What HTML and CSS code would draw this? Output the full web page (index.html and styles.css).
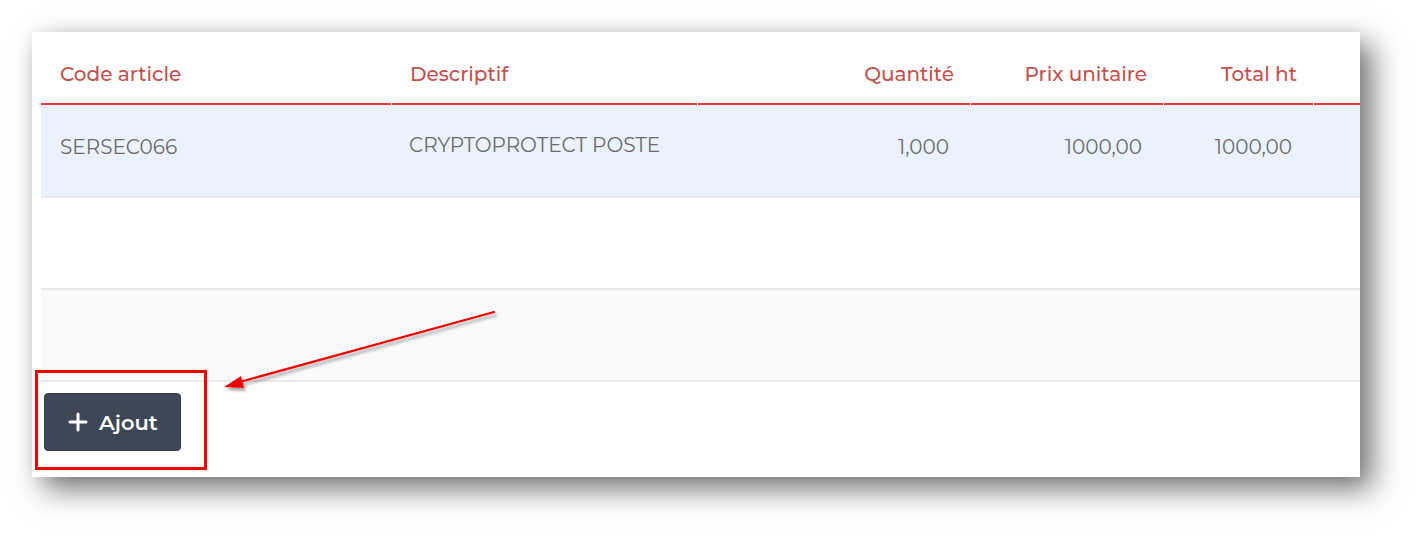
FILE: index.html
```html
<!DOCTYPE html>
<html lang="fr">
<head>
<meta charset="utf-8">
<title>Lignes</title>
<link rel="stylesheet" href="styles.css">
</head>
<body>
<div class="page">
  <div class="card">
    <div class="table-wrap">
      <table class="lines">
        <colgroup>
          <col class="c1"><col class="c2"><col class="c3"><col class="c4"><col class="c5"><col class="c6">
        </colgroup>
        <thead>
          <tr>
            <th class="left">Code article</th>
            <th class="left">Descriptif</th>
            <th class="right">Quantité</th>
            <th class="right">Prix unitaire</th>
            <th class="right">Total ht</th>
            <th></th>
          </tr>
        </thead>
        <tbody>
          <tr class="row-sel">
            <td class="left">SERSEC066</td>
            <td class="left desc">CRYPTOPROTECT POSTE</td>
            <td class="right">1,000</td>
            <td class="right">1000,00</td>
            <td class="right">1000,00</td>
            <td></td>
          </tr>
          <tr class="row-empty"><td></td><td></td><td></td><td></td><td></td><td></td></tr>
          <tr class="row-alt"><td></td><td></td><td></td><td></td><td></td><td></td></tr>
        </tbody>
      </table>
    </div>
    <div class="footer">
      <button class="btn-add">
        <svg class="plus" width="20" height="20" viewBox="0 0 20 20"><path d="M10 2V18M2 10H18" stroke="#ffffff" stroke-width="3" stroke-linecap="round"/></svg>
        <span>Ajout</span>
      </button>
    </div>
  </div>
  <div class="highlight"></div>
  <svg class="arrow" width="300" height="100" viewBox="0 0 300 100">
    <defs>
      <filter id="sh" x="-10%" y="-30%" width="130%" height="180%">
        <feDropShadow dx="2" dy="3" stdDeviation="1.5" flood-color="#000" flood-opacity="0.35"/>
      </filter>
    </defs>
    <g filter="url(#sh)">
      <line x1="284" y1="12" x2="26" y2="83" stroke="#f00000" stroke-width="2.2" stroke-linecap="round"/>
      <polygon points="14,87 31,76 34,88" fill="#f00000"/>
    </g>
  </svg>
</div>
</body>
</html>
```

FILE: styles.css
```css
* { box-sizing: border-box; }
html, body { margin: 0; padding: 0; background: #ffffff; }
body { font-family: "Montserrat", "Open Sans", "Liberation Sans", sans-serif; }

.page {
  position: relative;
  width: 1425px;
  height: 542px;
  padding: 32px 65px 65px 32px;
}

.card {
  width: 1328px;
  height: 445px;
  background: #ffffff;
  box-shadow: 12px 12px 28px rgba(0, 0, 0, 0.55), 0 0 14px rgba(0, 0, 0, 0.06);
  padding-left: 9px;
  overflow: hidden;
}

.table-wrap { width: 1319px; overflow: hidden; }

.lines {
  table-layout: fixed;
  border-collapse: collapse;
  border-spacing: 0;
  width: 1360px;
}
.c1 { width: 350px; }
.c2 { width: 306px; }
.c3 { width: 273px; }
.c4 { width: 193px; }
.c5 { width: 150px; }
.c6 { width: 88px; }

.lines th {
  height: 73px;
  padding: 10px 16px 0 19px;
  font-size: 20px;
  font-weight: 500;
  color: #c4524f;
  background-image: linear-gradient(#e4393b, #e4393b);
  background-repeat: no-repeat;
  background-size: calc(100% - 1px) 2px;
  background-position: right bottom;
  vertical-align: middle;
  white-space: nowrap;
}
.lines th:first-child { background-size: 100% 2px; }

.lines td {
  height: 92px;
  padding: 0 21px 8px 19px;
  font-size: 20px;
  color: #6c6c6c;
  border-bottom: 2px solid #ece7ea;
  vertical-align: middle;
  white-space: nowrap;
}
.lines td.desc { padding-left: 18px; padding-bottom: 12px; }

.left { text-align: left; }
.right { text-align: right; }

.row-sel td { background: #ebf2fe; }
.row-empty td { background: #ffffff; }
.row-alt td { background: #f8fafc; }

.footer { padding: 11px 0 0 3px; }

.btn-add {
  display: flex;
  align-items: center;
  gap: 11px;
  width: 137px;
  height: 58px;
  padding: 0 0 0 23px;
  background: #3d4756;
  border: 1px solid #343c48;
  border-radius: 4px;
  color: #ffffff;
  font-family: "Montserrat", "Open Sans", "Liberation Sans", sans-serif;
  font-size: 21px;
  font-weight: 600;
}
.plus { flex: none; }

.highlight {
  position: absolute;
  left: 35px;
  top: 370px;
  width: 172px;
  height: 100px;
  border: 3px solid #f40000;
}

.arrow {
  position: absolute;
  left: 210px;
  top: 300px;
}
```
